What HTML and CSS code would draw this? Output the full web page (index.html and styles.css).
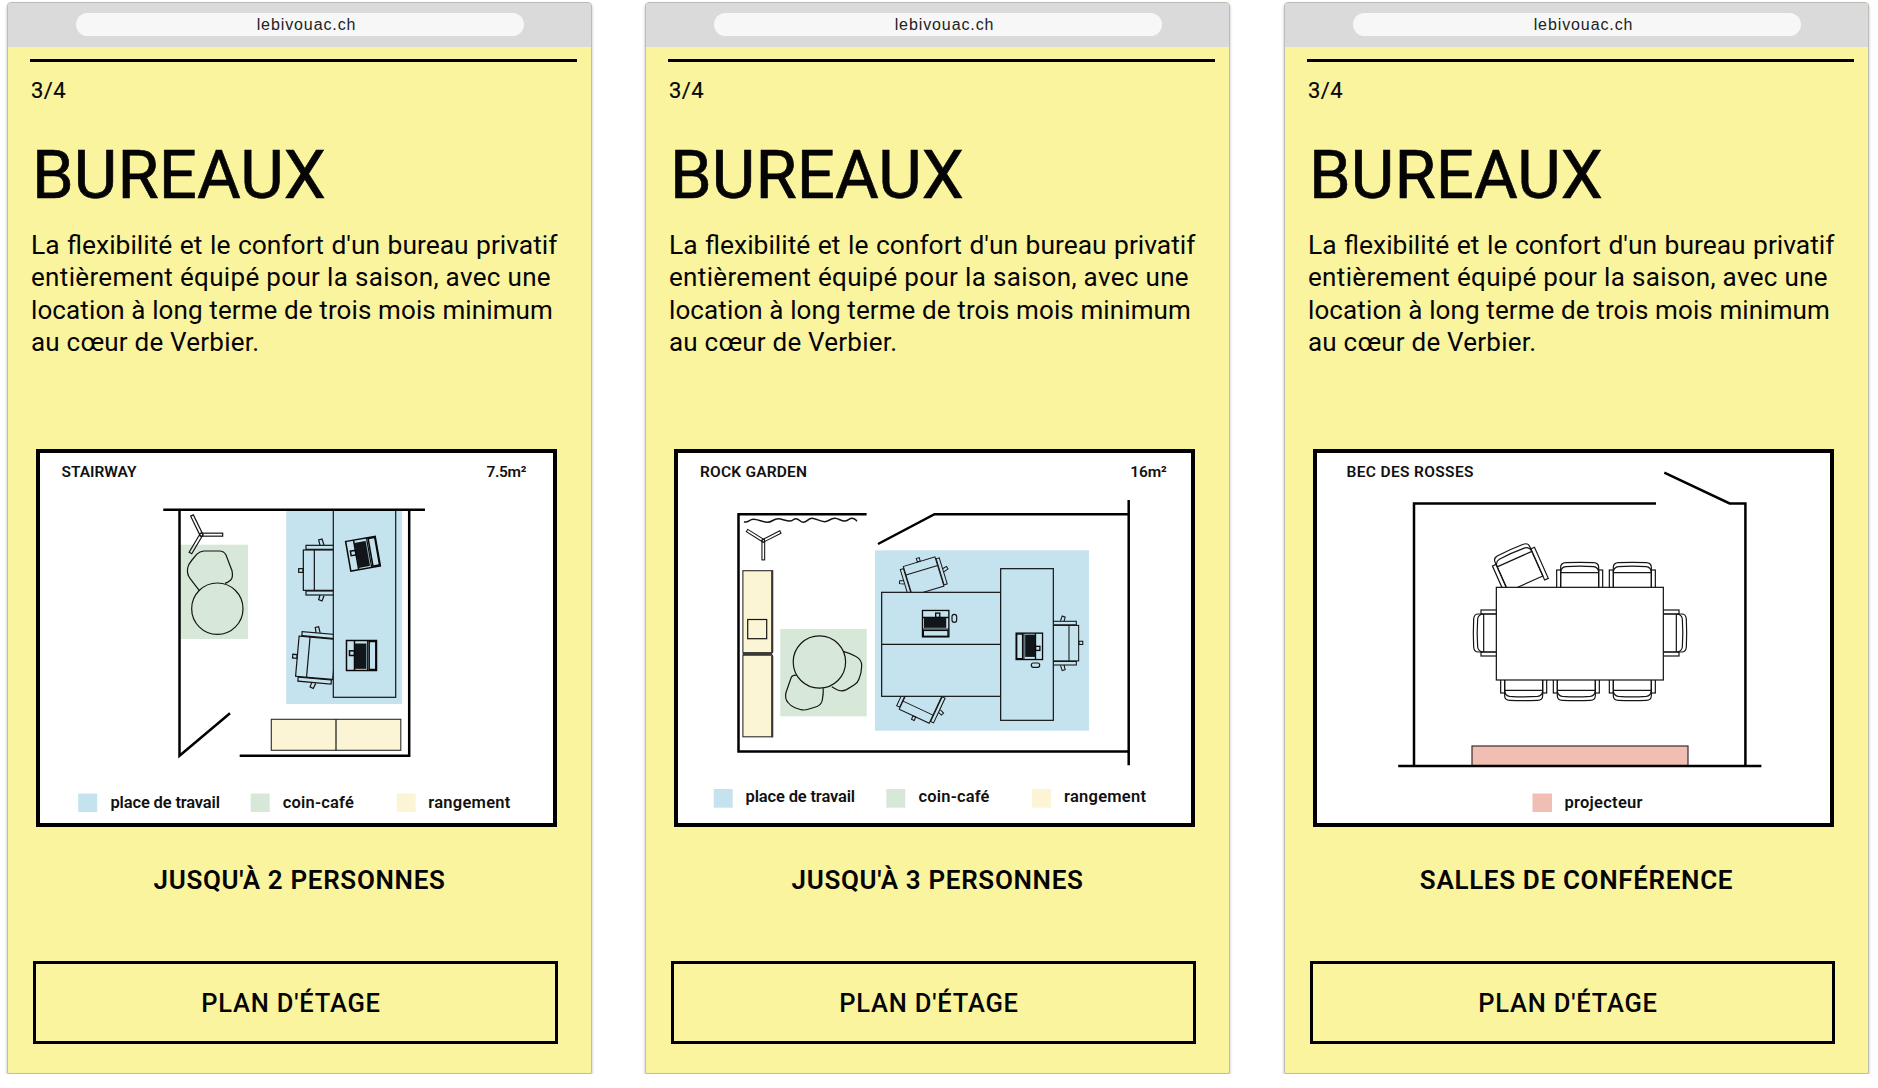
FILE: index.html
```html
<!DOCTYPE html>
<html lang="fr">
<head>
<meta charset="utf-8">
<title>Le Bivouac – Bureaux</title>
<link rel="stylesheet" href="styles.css">
</head>
<body>
<svg class="symbols" aria-hidden="true">
  <defs>
    <!-- office chair, back on the left, seat towards the right -->
    <g id="office-chair" class="thin">
      <rect x="0" y="-61" width="112" height="121"/>
      <path d="M33-61V60"/>
      <rect x="8" y="-75" width="100" height="12"/>
      <rect x="8" y="62" width="100" height="12"/>
      <rect x="-14" y="-5" width="13" height="11"/>
      <path d="M50-75L46-91 56-94 62-76M50 74L46 88 56 92 62 76"/>
    </g>
    <!-- laptop, screen on the right -->
    <g id="laptop">
      <rect class="thick" x="-45" y="-45" width="90" height="90"/>
      <path class="thick" d="M-21-45V45M18-45V45"/>
      <rect class="keys" x="-20" y="-36" width="37" height="76"/>
      <path class="gap" d="M15.500-42V42"/>
      <rect class="thick" x="-36" y="-14" width="15" height="14"/>
      <rect class="thick" x="23" y="-42" width="20" height="84"/>
    </g>
    <!-- meeting chair, back on top -->
    <g id="meeting-chair" class="thin">
      <path d="M-57 112V15Q-57 2-42 1Q0-1 42 1Q57 2 57 15V112Z"/>
      <path d="M-57 28Q-55 15-42 13Q0 10 42 13Q55 15 57 28M-57 31H57"/>
      <rect x="-69" y="23" width="12" height="102"/>
      <rect x="57" y="23" width="12" height="102"/>
    </g>
    <g id="leg" class="thin"><rect x="4" y="-4.500" width="60" height="9"/></g>
  </defs>
</svg>

<main class="screens">
  <section class="phone">
    <header class="bar"><div class="address">lebivouac.ch</div></header>
    <div class="content">
      <div class="step">3/4</div>
      <h1>BUREAUX</h1>
      <p class="intro"><span class="l1">La flexibilité et le confort d'un bureau privatif</span><span class="l2">entièrement équipé pour la saison, avec une</span><span class="l3">location à long terme de trois mois minimum</span><span class="l4">au cœur de Verbier.</span></p>
      <div class="card">
        <svg class="plan" viewBox="40 453 513 370">
          <text x="61.500" y="476.500" textLength="75">STAIRWAY</text>
          <text x="486.500" y="476.500" textLength="40">7.5m²</text>
          <rect class="work" x="286.200" y="511" width="115.700" height="193"/>
          <rect class="coffee" x="180" y="544.700" width="68" height="94.300"/>
          <g transform="translate(170 500) scale(.33333)">
            <use href="#leg" transform="translate(94 104) rotate(-116)"/>
            <use href="#leg" transform="translate(94 104)"/>
            <use href="#leg" transform="translate(94 104) rotate(120.700)"/>
            <circle class="thin" cx="94" cy="104" r="5"/>
            <circle class="thin" cx="142" cy="326" r="77"/>
            <path class="thin" d="M88 272L60 235Q50 222 53 204Q55 193 66 180L80 163Q89 154 102 153H148Q162 153 168 165L186 212Q190 233 182 240Q175 247 165 250"/>
            <use href="#office-chair" transform="translate(400 211)"/>
            <use href="#office-chair" transform="translate(382 469) rotate(5)"/>
          </g>
          <rect class="desk" x="333.300" y="510" width="62.400" height="187.300"/>
          <g transform="translate(170 500) scale(.33333)">
            <use href="#laptop" transform="translate(579 161) rotate(-10)"/>
            <use href="#laptop" transform="translate(574.500 466.500)"/>
          </g>
          <rect class="storage" x="271.300" y="719.300" width="129.500" height="31"/>
          <path class="line" d="M336 719.300V750.300"/>
          <path class="wall" d="M163.300 509.700H425M179.500 509.700V755.700L230 713.300M239.700 755.700H409.200V509.700"/>
          <rect class="work" x="78.200" y="793.500" width="19" height="18.500"/>
          <text class="key" x="110.500" y="808.300" textLength="109.500">place de travail</text>
          <rect class="coffee" x="250.700" y="793.500" width="19" height="18.500"/>
          <text class="key" x="282.800" y="808.300" textLength="71">coin-café</text>
          <rect class="storage-key" x="396.700" y="793.500" width="19" height="18.500"/>
          <text class="key" x="428.300" y="808.300" textLength="82">rangement</text>
        </svg>
      </div>
      <h2>JUSQU'À 2 PERSONNES</h2>
      <a class="button"><span>PLAN D'ÉTAGE</span></a>
    </div>
  </section>

  <section class="phone">
    <header class="bar"><div class="address">lebivouac.ch</div></header>
    <div class="content">
      <div class="step">3/4</div>
      <h1>BUREAUX</h1>
      <p class="intro"><span class="l1">La flexibilité et le confort d'un bureau privatif</span><span class="l2">entièrement équipé pour la saison, avec une</span><span class="l3">location à long terme de trois mois minimum</span><span class="l4">au cœur de Verbier.</span></p>
      <div class="card">
        <svg class="plan" viewBox="678 453 513 370">
          <text x="700" y="476.500" textLength="107">ROCK GARDEN</text>
          <text x="1130.300" y="476.500" textLength="36.500">16m²</text>
          <rect class="work" x="875" y="550.300" width="214" height="180.400"/>
          <rect class="coffee" x="780.200" y="629" width="86.600" height="87.300"/>
          <path class="line curtain" d="M744 521.700C748 523.500 749 519.300 753.500 519.300S763 522.300 767.500 522.300 773.500 518.700 778 518.700 786 521.300 790 521 792.700 518.700 796 518.700 800 522.300 803.500 522.300 808 518.300 812 518.300 820 521.700 824.500 521.700 830 518.300 834.600 518.300 841 521.500 845 521 849 518.300 852 518.300 855 519.300 857 521.300"/>
          <g transform="translate(763.300 540.700) scale(.3)">
            <use href="#leg" transform="rotate(-148)"/>
            <use href="#leg" transform="rotate(-27)"/>
            <use href="#leg" transform="rotate(90)"/>
            <circle class="thin" r="5"/>
          </g>
          <rect class="storage" x="742.900" y="570.700" width="29.500" height="82"/>
          <rect class="storage" x="742.900" y="655.200" width="29.500" height="81.600"/>
          <path class="edge" d="M772.200 570.300V652.500M772.200 656V737.300M742.700 653.900H772"/>
          <rect class="line" x="747.700" y="619.500" width="19" height="19.200"/>
          <circle class="line" cx="819.400" cy="662" r="26.200"/>
          <path class="line" d="M843.200 651.300Q850 653 856 656.600Q862 660 861.700 666Q861.500 673 859 679Q858 682.500 854 685L846.500 689.600Q841.500 692 836.500 689.500L831.800 686.700M796.700 675.300Q792.500 674.800 791.200 677.500L786 692.500Q784.500 698.500 788 702.500Q791 706.500 795 707.700L801 709.700Q804.500 710.500 809 709L817 706.500Q821.500 704.500 822.300 700Q823.600 693 823.200 688.300"/>
          <g transform="translate(860 540) scale(.33333)">
            <use href="#office-chair" transform="translate(656 309) rotate(180) scale(.88)"/>
            <use href="#office-chair" transform="translate(177 65) rotate(73) scale(.82)"/>
            <use href="#office-chair" transform="translate(163 529) rotate(-65) scale(.82)"/>
            <rect class="desk" x="65" y="157" width="357" height="312"/>
            <path class="thin" d="M65 313H422"/>
            <rect class="desk" x="422" y="86" width="158" height="455"/>
            <use href="#laptop" transform="translate(227 251) rotate(90) scale(.88)"/>
            <use href="#laptop" transform="translate(508 319) rotate(180) scale(.88)"/>
            <rect class="thin" x="276" y="223" width="14" height="24" rx="7"/>
            <rect class="thin" x="514" y="369" width="25" height="13" rx="6"/>
          </g>
          <path class="wall" d="M866.600 514.200H738.500V751.500H1128.700M1128.700 500V765.300M1128.700 514.200H934.500L878 544"/>
          <rect class="work" x="713.700" y="789" width="19" height="18.700"/>
          <text class="key" x="745.600" y="802" textLength="109.500">place de travail</text>
          <rect class="coffee" x="886.300" y="789" width="19" height="18.700"/>
          <text class="key" x="918.500" y="802" textLength="71">coin-café</text>
          <rect class="storage-key" x="1032" y="789" width="19" height="18.700"/>
          <text class="key" x="1064" y="802" textLength="82">rangement</text>
        </svg>
      </div>
      <h2>JUSQU'À 3 PERSONNES</h2>
      <a class="button"><span>PLAN D'ÉTAGE</span></a>
    </div>
  </section>

  <section class="phone">
    <header class="bar"><div class="address">lebivouac.ch</div></header>
    <div class="content">
      <div class="step">3/4</div>
      <h1>BUREAUX</h1>
      <p class="intro"><span class="l1">La flexibilité et le confort d'un bureau privatif</span><span class="l2">entièrement équipé pour la saison, avec une</span><span class="l3">location à long terme de trois mois minimum</span><span class="l4">au cœur de Verbier.</span></p>
      <div class="card">
        <svg class="plan" viewBox="1317 453 513 370">
          <text x="1346.500" y="476.500" textLength="127">BEC DES ROSSES</text>
          <g transform="translate(1460 530) scale(.33333)">
            <use href="#meeting-chair" transform="translate(151 59) rotate(-24)"/>
            <use href="#meeting-chair" transform="translate(359 97)"/>
            <use href="#meeting-chair" transform="translate(517 97)"/>
            <use href="#meeting-chair" transform="translate(191 512) rotate(180)"/>
            <use href="#meeting-chair" transform="translate(349 512) rotate(180)"/>
            <use href="#meeting-chair" transform="translate(517 512) rotate(180)"/>
            <use href="#meeting-chair" transform="translate(40 309) rotate(-90)"/>
            <use href="#meeting-chair" transform="translate(680 309) rotate(90)"/>
            <rect class="table" x="109" y="172" width="501" height="278"/>
          </g>
          <rect class="screen" x="1472" y="746" width="216" height="20"/>
          <path class="wall" d="M1656 503.400H1414V766M1398.200 766H1761.400M1745.400 766V503.400H1729.600L1664.300 472.700"/>
          <rect class="screen-key" x="1532.500" y="793.500" width="19.500" height="18.500"/>
          <text class="key" x="1564.500" y="808.300" textLength="78">projecteur</text>
        </svg>
      </div>
      <h2>SALLES DE CONFÉRENCE</h2>
      <a class="button"><span>PLAN D'ÉTAGE</span></a>
    </div>
  </section>
</main>
</body>
</html>
```
FILE: styles.css
```css
* { box-sizing: border-box; }

body {
  margin: 0;
  background: #fff;
  color: #050505;
  font-family: Roboto, "Liberation Sans", sans-serif;
  overflow: hidden;
}

.symbols { display: block; width: 0; height: 0; }

.screens {
  display: flex;
  padding: 2px 0 0 7px;
}

.phone {
  flex: none;
  display: flex;
  flex-direction: column;
  width: 585px;
  height: 1072px;
  border: 1px solid #bdbcb6;
  border-radius: 4px 4px 2px 2px;
  background: #fbf49f;
  box-shadow: 0 2px 3px rgba(60, 60, 90, .35);
  overflow: hidden;
}
.phone:nth-child(2) { margin-left: 53px; }
.phone:nth-child(3) { margin-left: 54px; }

.bar {
  height: 44px;
  padding: 10px 67px 0 68px;
  background: #dadada;
}
.address {
  height: 23px;
  padding-left: 13px;
  border-radius: 12px;
  background: #f7f7f7;
  color: #222;
  font: 16px/23px "Liberation Sans", Arial, sans-serif;
  letter-spacing: .9px;
  text-align: center;
}

.content {
  display: flex;
  flex-direction: column;
  padding: 12px 14px 0 22px;
}

.step {
  height: 74px;
  border-top: 3px solid #000;
  padding: 16px 0 0 1px;
  font-size: 22px;
  line-height: 26px;
  letter-spacing: .4px;
  -webkit-text-stroke: .2px #050505;
}

h1 {
  margin: 0 0 0 2px;
  height: 96px;
  font-size: 67px;
  font-weight: 400;
  line-height: 84px;
  letter-spacing: .1px;
  -webkit-text-stroke: .7px #050505;
}

.intro {
  margin: 0;
  padding-left: 1px;
  height: 220px;
  font-size: 26px;
  line-height: 32.300px;
}
.intro span { display: block; white-space: nowrap; }
.l1 { font-size: 26.400px; word-spacing: 1px; }
.l2 { letter-spacing: .33px; }
.l3 { letter-spacing: .11px; }
.l4 { letter-spacing: .22px; }

.card {
  width: 521px;
  height: 378px;
  margin-left: 6px;
  border: 4px solid #000;
  background: #fff;
}
.plan { display: block; width: 513px; height: 370px; }
.plan text { font-size: 15.500px; font-weight: 600; fill: #111; }
.plan .key { font-size: 16.500px; }

.wall { fill: none; stroke: #000; stroke-width: 2.500; }
.line { fill: none; stroke: #151515; stroke-width: 1.200; }
.curtain { stroke-width: 1.500; }
.thin { fill: none; stroke: #151515; stroke-width: 3.600; }
.thick { fill: none; stroke: #080808; stroke-width: 4.500; }
.keys { fill: #10161a; }
.gap { stroke: #c5e3ee; stroke-width: 2; }
.edge { fill: none; stroke: #3b3937; stroke-width: 2.200; }
.work { fill: #c5e3ee; }
.desk { fill: #c5e3ee; stroke: #151515; stroke-width: 1.200; }
g > .desk { stroke-width: 3.600; }
.table { fill: #fff; stroke: #111; stroke-width: 3.600; }
.coffee { fill: #d7e8d8; }
.storage { fill: #fbf5d5; stroke: #2c2b28; stroke-width: 1.100; }
.storage-key { fill: #fbf5d5; }
.screen { fill: #f0beb2; stroke: #3a2c2a; stroke-width: 1.200; }
.screen-key { fill: #f0beb2; }

h2 {
  margin: 37px 0 0 -1px;
  height: 97px;
  width: 541px;
  font-size: 26px;
  font-weight: 600;
  line-height: 32px;
  letter-spacing: .67px;
  text-align: center;
}

.button {
  display: flex;
  justify-content: center;
  align-items: center;
  width: 525px;
  height: 83px;
  margin-left: 3px;
  padding-right: 9px;
  border: 3px solid #000;
  font-size: 25.500px;
  font-weight: 500;
  letter-spacing: .8px;
}
```
